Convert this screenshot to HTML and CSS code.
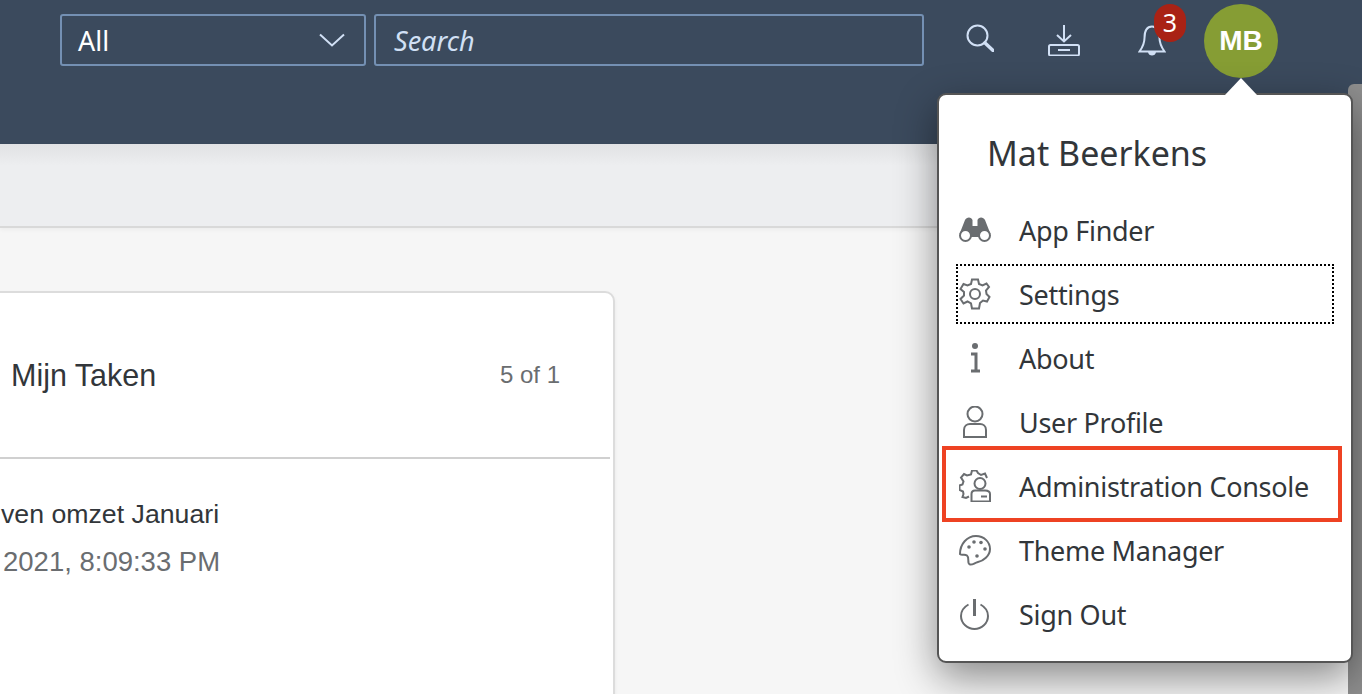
FILE: index.html
```html
<!DOCTYPE html>
<html lang="en">
<head>
  <meta charset="UTF-8">
  <title>Home</title>
  <link rel="stylesheet" href="styles.css">
</head>
<body>
  <header class="shell-bar">
    <div class="scope-select">
      <span>All</span>
      <svg class="chevron" width="26" height="14" viewBox="0 0 26 14"><path d="M1 1.5 13 12.5 25 1.5"/></svg>
    </div>
    <div class="search-box">Search</div>
    <svg class="bar-icon icon-search" width="28" height="28" viewBox="0 0 28 28"><circle cx="11.5" cy="11.5" r="10"/><path d="M18.800 18.800 27 26.500" stroke-width="3.400" stroke-linecap="round"/></svg>
    <svg class="bar-icon icon-download" width="32" height="32" viewBox="0 0 32 32"><path d="M16 1V17M9 11 16 17.500 23 11"/><rect x="1" y="21" width="30" height="10.500" rx="1.500"/><path d="M10 26H22"/></svg>
    <div class="bell-wrap">
      <svg class="bar-icon" width="28" height="32" viewBox="0 0 28 32"><path d="M14 2.500C7 2.500 6.500 9 6.500 14 6.500 20 4 24 1.500 27.500H26.500C24 24 21.500 20 21.500 14 21.500 9 21 2.500 14 2.500Z"/><path d="M10 28C10.500 32.800 17.500 32.800 18 28Z" class="solid"/></svg>
      <span class="badge">3</span>
    </div>
    <div class="avatar">MB</div>
  </header>

  <div class="sub-bar"></div>

  <main class="content">
    <section class="card">
      <div class="card-head">
        <h2>Mijn Taken</h2>
        <span class="count">5 of 1</span>
      </div>
      <div class="task">
        <div class="task-title">ven omzet Januari</div>
        <div class="task-date">2021, 8:09:33 PM</div>
      </div>
    </section>
  </main>

  <div class="scrollbar"></div>

  <div class="user-menu">
    <span class="caret"></span>
    <h1>Mat Beerkens</h1>
    <ul>
      <li>
        <svg width="32" height="26" viewBox="0 0 32 26"><path class="solid" d="M0.500 17 6 3C7.500 -.5 12.500 -.5 13.500 3V9H18.500V3C19.500 -.5 24.500 -.5 26 3L31.500 17 25 20H7Z"/><circle class="ring" cx="6.500" cy="18.500" r="5.500"/><circle class="ring" cx="25.500" cy="18.500" r="5.500"/></svg>
        App Finder
      </li>
      <li class="focused">
        <svg width="32" height="32" viewBox="0 0 32 32"><path d="M13 1.500H19L20 6 23.500 7.500 27.500 5.500 30 9 27 12.500 27.500 16 30.500 19 28 23.500 24 22.500 21 25 20 30.500H13L12 25.500 8.500 23.500 4.500 25.500 1.500 21 5 17.500V14L1.500 11 4.500 6 8.500 7.500 12 6Z"/><circle cx="16" cy="16" r="5"/></svg>
        Settings
      </li>
      <li>
        <svg width="32" height="32" viewBox="0 0 32 32"><circle class="solid" cx="16" cy="4" r="3"/><path class="thick" d="M12 12H17V28M12 29H21"/></svg>
        About
      </li>
      <li>
        <svg width="32" height="32" viewBox="0 0 32 32"><circle cx="16" cy="8" r="7.500"/><path d="M5 31V24C5 20 8 18 11 18H21C24 18 27 20 27 24V31Z"/></svg>
        User Profile
      </li>
      <li>
        <svg width="32" height="32" viewBox="0 0 32 32"><path d="M28 8 26 3.500 22 5 19 3 17.500 .5H13L12 4.500 8 5.500 5 4 2 7.500 4.500 11.500 3.500 14.500 .5 15.500V20L4 21.500 4.500 24 3.500 27 7 28 10 26.500"/><circle cx="21" cy="13.500" r="5.500"/><path d="M12.500 31.500V24C12.500 22 14 20.500 16 20.500H26C29 20.500 31 22 31 24V31.500ZM22 26.500H28"/></svg>
        Administration Console
      </li>
      <li>
        <svg width="32" height="32" viewBox="0 0 32 32"><path d="M1 20C1 10 8 2 17 2 25 2 31 8 31 15 31 22 24 27 19 28 15 29 14 31 11 30.500 7.500 29.500 11 24 8 21.500 5 19.500 3 22 1 20Z"/><circle class="solid" cx="10" cy="13" r="1.800"/><circle class="solid" cx="15" cy="8" r="1.800"/><circle class="solid" cx="22" cy="8.500" r="1.800"/><circle class="solid" cx="26" cy="15" r="1.800"/><circle class="solid" cx="18" cy="22" r="1.800"/></svg>
        Theme Manager
      </li>
      <li>
        <svg width="32" height="32" viewBox="0 0 32 32"><path d="M9.500 6.500C5 9 2 13 2 18 2 25.500 8.500 31 15.500 31 22.500 31 29 25.500 29 18 29 13 26 9 21.500 6.500"/><path class="thick" d="M15.500 1V18"/></svg>
        Sign Out
      </li>
    </ul>
    <div class="highlight"></div>
  </div>
</body>
</html>
```

FILE: styles.css
```css
* {
  box-sizing: border-box;
}
html, body {
  height: 100%;
}
body {
  margin: 0;
  overflow: hidden;
  position: relative;
  font-family: "Noto Sans", "Open Sans", sans-serif;
  background: #f6f6f6;
  color: #32363a;
}
svg {
  fill: none;
  stroke: #6a6d70;
  stroke-width: 2;
  flex: none;
}
svg .solid {
  fill: #6a6d70;
  stroke: none;
}
svg .ring {
  fill: #fff;
}
svg .thick {
  stroke-width: 3;
}

/* top bar */
.shell-bar {
  height: 144px;
  background: #3b4a5d;
  padding: 4px 0 0 60px;
  display: flex;
  align-items: flex-start;
}
.scope-select, .search-box {
  height: 52px;
  margin-top: 10px;
  border: 2px solid #7490b3;
  border-radius: 3px;
  display: flex;
  align-items: center;
  font-size: 27px;
}
.scope-select {
  width: 306px;
  padding: 0 19px 0 16px;
  justify-content: space-between;
  color: #fff;
}
.chevron {
  stroke: #d1e0f5;
}
.search-box {
  width: 550px;
  margin-left: 8px;
  padding-left: 18px;
  color: #d1e0f5;
  font-style: italic;
}
.bar-icon {
  stroke: #d1e0f5;
}
.bar-icon .solid {
  fill: #d1e0f5;
}
.icon-search {
  margin: 20px 0 0 42px;
}
.icon-download {
  margin: 20px 0 0 54px;
}
.bell-wrap {
  position: relative;
  margin: 20px 0 0 58px;
}
.badge {
  position: absolute;
  left: 16px;
  top: -20px;
  width: 32px;
  height: 38px;
  border-radius: 16px;
  background: #a92215;
  color: #fff;
  font-size: 25px;
  line-height: 36px;
  text-align: center;
}
.avatar {
  width: 74px;
  height: 74px;
  margin-left: 38px;
  border-radius: 50%;
  background: #869d34;
  color: #fff;
  font: bold 28px/74px "Liberation Sans", sans-serif;
  text-align: center;
}

/* page under the bar */
.sub-bar {
  height: 84px;
  background: linear-gradient(#e1e2e4, #edeef0 22px);
  border-bottom: 2px solid #d9d9d9;
  box-shadow: 0 2px 4px rgba(0,0,0,0.04);
}
.content {
  padding-top: 63px;
}
.card {
  width: 625px;
  height: 420px;
  margin-left: -10px;
  background: #fff;
  border: 2px solid #dcdcdc;
  border-radius: 10px;
  box-shadow: 0 2px 4px rgba(0,0,0,0.06);
  padding: 0 3px 0 0;
}
.card-head {
  height: 166px;
  padding: 0 50px 0 19px;
  border-bottom: 2px solid #d0d0d0;
  display: flex;
  justify-content: space-between;
  align-items: center;
  font-family: "Liberation Sans", sans-serif;
}
.card-head h2 {
  margin: 0;
  font-size: 30.500px;
  font-weight: 400;
}
.count {
  font-size: 24px;
  color: #6a6d70;
}
.task {
  padding-top: 37px;
  font-family: "Liberation Sans", sans-serif;
  white-space: nowrap;
}
.task-title {
  margin-left: 9px;
  font-size: 26.700px;
  line-height: 36px;
}
.task-date {
  margin: 12px 0 0 11px;
  font-size: 27.500px;
  line-height: 36px;
  color: #6a6d70;
}

/* scrollbar behind the menu */
.scrollbar {
  position: absolute;
  top: 84px;
  right: 0;
  bottom: 0;
  width: 14px;
  background: #8e8e8e;
  border-radius: 6px 0 0 0;
}

/* user menu */
.user-menu {
  position: absolute;
  left: 937px;
  top: 93px;
  width: 416px;
  height: 570px;
  background: #fff;
  border: 2px solid #555;
  border-radius: 9px;
  box-shadow: 0 14px 40px rgba(0,0,0,0.45);
  padding: 0 18px;
}
.caret {
  position: absolute;
  left: 286px;
  top: -17px;
  border-left: 16px solid transparent;
  border-right: 16px solid transparent;
  border-bottom: 17px solid #fff;
}
.user-menu h1 {
  margin: 0;
  padding: 36px 0 0 30px;
  height: 103px;
  font-size: 34px;
  line-height: 44px;
  font-weight: 400;
}
.user-menu ul {
  margin: 0;
  padding: 0;
  list-style: none;
}
.user-menu li {
  height: 64px;
  display: flex;
  align-items: center;
  gap: 28px;
  padding-left: 2px;
  font-size: 27px;
  letter-spacing: -0.3px;
}
.user-menu li.focused {
  height: 60px;
  margin: 2px -1px;
  padding-left: 1px;
  border: 2px dotted #000;
}
.highlight {
  position: absolute;
  left: 3px;
  top: 351px;
  width: 400px;
  height: 76px;
  border: 4px solid #ee4223;
}
```
